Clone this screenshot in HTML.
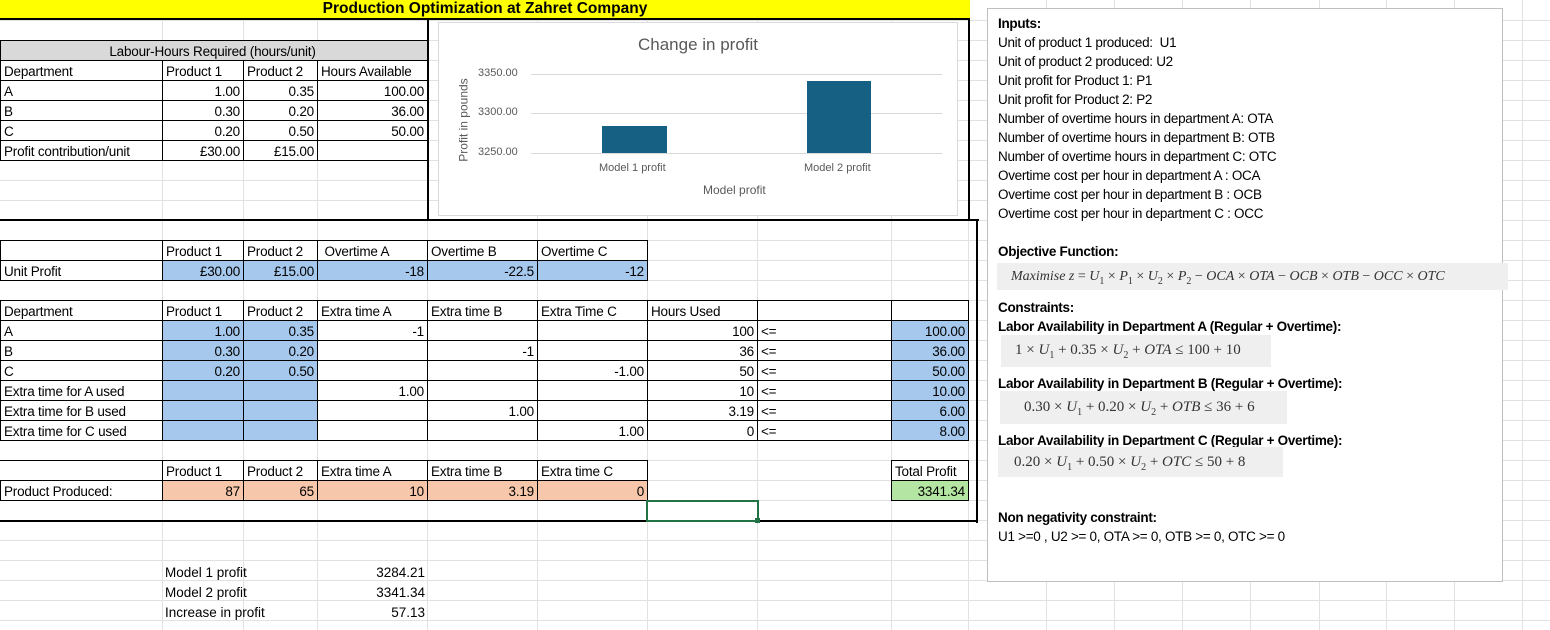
<!DOCTYPE html>
<html><head><meta charset="utf-8"><style>
*{margin:0;padding:0;box-sizing:border-box}
body{width:1550px;height:630px;position:relative;overflow:hidden;background:#fff;font-family:"Liberation Sans",sans-serif;font-size:13.5px;color:#000}
.g{position:absolute;background:#e1e1e1}
.c{position:absolute;height:21px;line-height:21px;border:1px solid #000;padding:0 3px;white-space:nowrap;overflow:hidden;letter-spacing:-0.2px}
.n{position:absolute;height:20px;line-height:21px;padding:0 3px;white-space:nowrap}
.r{text-align:right}
.b{background:#a6c8ec}
.s{background:#f7c7ac}
.t{position:absolute;left:998px;font-size:13.5px;line-height:19px;white-space:nowrap;letter-spacing:-0.3px}
.h{font-weight:bold}
.m{position:absolute;background:#efefef;font-family:"Liberation Serif",serif;font-size:15px;color:#333;white-space:nowrap;padding-left:14px}
.m i{font-style:italic}
.m sub{font-size:10px;line-height:0}
.ax{position:absolute;font-size:11px;color:#595959;white-space:nowrap}
</style></head><body>
<div id="grid"></div>
<script>
var g=document.getElementById('grid'),h='';
var xs=[162,243,317,427,537,647,757,891,968,1046,1114,1182,1250,1319,1386,1454,1522];
xs.forEach(function(x){h+='<div class="g" style="left:'+x+'px;top:0;width:1px;height:630px"></div>';});
for(var y=20;y<630;y+=20)h+='<div class="g" style="left:0;top:'+y+'px;width:1550px;height:1px"></div>';
g.innerHTML=h;
</script>
<div style="position:absolute;left:0;top:0;width:970px;height:18px;background:#ffff00;text-align:center;font-weight:bold;font-size:15.5px;line-height:18px">Production Optimization at Zahret Company</div>
<div style="position:absolute;left:0;top:18px;width:970px;height:2px;background:#000"></div>

<div class="c" style="left:0;top:40px;width:428px;background:#d9d9d9;text-align:center;padding-left:0">Labour-Hours Required (hours/unit)</div>
<div class="c" style="left:0;top:60px;width:163px">Department</div><div class="c" style="left:162px;top:60px;width:82px">Product 1</div><div class="c" style="left:243px;top:60px;width:75px">Product 2</div><div class="c" style="left:317px;top:60px;width:111px">Hours Available</div>
<div class="c" style="left:0;top:80px;width:163px">A</div><div class="c r" style="left:162px;top:80px;width:82px">1.00</div><div class="c r" style="left:243px;top:80px;width:75px">0.35</div><div class="c r" style="left:317px;top:80px;width:111px">100.00</div>
<div class="c" style="left:0;top:100px;width:163px">B</div><div class="c r" style="left:162px;top:100px;width:82px">0.30</div><div class="c r" style="left:243px;top:100px;width:75px">0.20</div><div class="c r" style="left:317px;top:100px;width:111px">36.00</div>
<div class="c" style="left:0;top:120px;width:163px">C</div><div class="c r" style="left:162px;top:120px;width:82px">0.20</div><div class="c r" style="left:243px;top:120px;width:75px">0.50</div><div class="c r" style="left:317px;top:120px;width:111px">50.00</div>
<div class="c" style="left:0;top:140px;width:163px">Profit contribution/unit</div><div class="c r" style="left:162px;top:140px;width:82px">£30.00</div><div class="c r" style="left:243px;top:140px;width:75px">£15.00</div><div class="c" style="left:317px;top:140px;width:111px"></div>

<div style="position:absolute;left:427px;top:18px;width:2px;height:203px;background:#000"></div>
<div style="position:absolute;left:968px;top:18px;width:2px;height:203px;background:#000"></div>
<div style="position:absolute;left:438px;top:22px;width:520px;height:194px;background:#fff;border:1px solid #d9d9d9"></div>
<div style="position:absolute;left:438px;top:35px;width:520px;text-align:center;font-size:17px;color:#595959">Change in profit</div>
<div style="position:absolute;left:531px;top:74px;width:411px;height:1px;background:#d9d9d9"></div>
<div style="position:absolute;left:531px;top:113px;width:411px;height:1px;background:#d9d9d9"></div>
<div style="position:absolute;left:531px;top:153px;width:411px;height:1px;background:#d9d9d9"></div>
<div class="ax" style="left:478px;top:67px">3350.00</div>
<div class="ax" style="left:478px;top:106px">3300.00</div>
<div class="ax" style="left:478px;top:146px">3250.00</div>
<div style="position:absolute;left:602px;top:126px;width:65px;height:27px;background:#166083"></div>
<div style="position:absolute;left:807px;top:81px;width:64px;height:72px;background:#166083"></div>
<div class="ax" style="left:599px;top:162px">Model 1 profit</div>
<div class="ax" style="left:804px;top:162px">Model 2 profit</div>
<div class="ax" style="left:703px;top:183px;font-size:12px">Model profit</div>
<div class="ax" style="left:416px;top:113px;font-size:12px;transform:rotate(-90deg);transform-origin:center;width:95px;text-align:center">Profit in pounds</div>

<div style="position:absolute;left:0;top:219px;width:979px;height:2px;background:#000"></div>
<div style="position:absolute;left:976px;top:219px;width:2px;height:304px;background:#000"></div>
<div style="position:absolute;left:0;top:520px;width:978px;height:2px;background:#000"></div>

<div class="c" style="left:0;top:240px;width:163px"></div><div class="c" style="left:162px;top:240px;width:82px">Product 1</div><div class="c" style="left:243px;top:240px;width:75px">Product 2</div><div class="c" style="left:317px;top:240px;width:111px">&nbsp;Overtime A</div><div class="c" style="left:427px;top:240px;width:111px">Overtime B</div><div class="c" style="left:537px;top:240px;width:111px">Overtime C</div>
<div class="c" style="left:0;top:260px;width:163px">Unit Profit</div><div class="c r b" style="left:162px;top:260px;width:82px">£30.00</div><div class="c r b" style="left:243px;top:260px;width:75px">£15.00</div><div class="c r b" style="left:317px;top:260px;width:111px">-18</div><div class="c r b" style="left:427px;top:260px;width:111px">-22.5</div><div class="c r b" style="left:537px;top:260px;width:111px">-12</div>

<div class="c" style="left:0;top:300px;width:163px">Department</div><div class="c" style="left:162px;top:300px;width:82px">Product 1</div><div class="c" style="left:243px;top:300px;width:75px">Product 2</div><div class="c" style="left:317px;top:300px;width:111px">Extra time A</div><div class="c" style="left:427px;top:300px;width:111px">Extra time B</div><div class="c" style="left:537px;top:300px;width:111px">Extra Time C</div><div class="c" style="left:647px;top:300px;width:111px">Hours Used</div><div class="c" style="left:757px;top:300px;width:135px"></div><div class="c" style="left:891px;top:300px;width:78px"></div>

<div class="c" style="left:0;top:320px;width:163px">A</div><div class="c r b" style="left:162px;top:320px;width:82px">1.00</div><div class="c r b" style="left:243px;top:320px;width:75px">0.35</div><div class="c r" style="left:317px;top:320px;width:111px">-1</div><div class="c" style="left:427px;top:320px;width:111px"></div><div class="c" style="left:537px;top:320px;width:111px"></div><div class="c r" style="left:647px;top:320px;width:111px">100</div><div class="c" style="left:757px;top:320px;width:135px">&lt;=</div><div class="c r b" style="left:891px;top:320px;width:78px">100.00</div>

<div class="c" style="left:0;top:340px;width:163px">B</div><div class="c r b" style="left:162px;top:340px;width:82px">0.30</div><div class="c r b" style="left:243px;top:340px;width:75px">0.20</div><div class="c" style="left:317px;top:340px;width:111px"></div><div class="c r" style="left:427px;top:340px;width:111px">-1</div><div class="c" style="left:537px;top:340px;width:111px"></div><div class="c r" style="left:647px;top:340px;width:111px">36</div><div class="c" style="left:757px;top:340px;width:135px">&lt;=</div><div class="c r b" style="left:891px;top:340px;width:78px">36.00</div>

<div class="c" style="left:0;top:360px;width:163px">C</div><div class="c r b" style="left:162px;top:360px;width:82px">0.20</div><div class="c r b" style="left:243px;top:360px;width:75px">0.50</div><div class="c" style="left:317px;top:360px;width:111px"></div><div class="c" style="left:427px;top:360px;width:111px"></div><div class="c r" style="left:537px;top:360px;width:111px">-1.00</div><div class="c r" style="left:647px;top:360px;width:111px">50</div><div class="c" style="left:757px;top:360px;width:135px">&lt;=</div><div class="c r b" style="left:891px;top:360px;width:78px">50.00</div>

<div class="c" style="left:0;top:380px;width:163px">Extra time for A used</div><div class="c b" style="left:162px;top:380px;width:82px"></div><div class="c b" style="left:243px;top:380px;width:75px"></div><div class="c r" style="left:317px;top:380px;width:111px">1.00</div><div class="c" style="left:427px;top:380px;width:111px"></div><div class="c" style="left:537px;top:380px;width:111px"></div><div class="c r" style="left:647px;top:380px;width:111px">10</div><div class="c" style="left:757px;top:380px;width:135px">&lt;=</div><div class="c r b" style="left:891px;top:380px;width:78px">10.00</div>

<div class="c" style="left:0;top:400px;width:163px">Extra time for B used</div><div class="c b" style="left:162px;top:400px;width:82px"></div><div class="c b" style="left:243px;top:400px;width:75px"></div><div class="c" style="left:317px;top:400px;width:111px"></div><div class="c r" style="left:427px;top:400px;width:111px">1.00</div><div class="c" style="left:537px;top:400px;width:111px"></div><div class="c r" style="left:647px;top:400px;width:111px">3.19</div><div class="c" style="left:757px;top:400px;width:135px">&lt;=</div><div class="c r b" style="left:891px;top:400px;width:78px">6.00</div>

<div class="c" style="left:0;top:420px;width:163px">Extra time for C used</div><div class="c b" style="left:162px;top:420px;width:82px"></div><div class="c b" style="left:243px;top:420px;width:75px"></div><div class="c" style="left:317px;top:420px;width:111px"></div><div class="c" style="left:427px;top:420px;width:111px"></div><div class="c r" style="left:537px;top:420px;width:111px">1.00</div><div class="c r" style="left:647px;top:420px;width:111px">0</div><div class="c" style="left:757px;top:420px;width:135px">&lt;=</div><div class="c r b" style="left:891px;top:420px;width:78px">8.00</div>

<div class="c" style="left:0;top:460px;width:163px;border-left:0"></div><div class="c" style="left:162px;top:460px;width:82px">Product 1</div><div class="c" style="left:243px;top:460px;width:75px">Product 2</div><div class="c" style="left:317px;top:460px;width:111px">Extra time A</div><div class="c" style="left:427px;top:460px;width:111px">Extra time B</div><div class="c" style="left:537px;top:460px;width:111px">Extra time C</div><div class="c" style="left:891px;top:460px;width:78px">Total Profit</div>
<div class="c" style="left:0;top:480px;width:163px">Product Produced:</div><div class="c r s" style="left:162px;top:480px;width:82px">87</div><div class="c r s" style="left:243px;top:480px;width:75px">65</div><div class="c r s" style="left:317px;top:480px;width:111px">10</div><div class="c r s" style="left:427px;top:480px;width:111px">3.19</div><div class="c r s" style="left:537px;top:480px;width:111px">0</div><div class="c r" style="left:891px;top:480px;width:78px;background:#b4e5a2">3341.34</div>
<div style="position:absolute;left:646px;top:500px;width:113px;height:22px;border:2px solid #217346;background:#fff"></div>
<div style="position:absolute;left:755px;top:518px;width:5px;height:5px;background:#217346"></div>

<div class="n" style="left:162px;top:562px">Model 1 profit</div><div class="n r" style="left:317px;top:562px;width:111px">3284.21</div>
<div class="n" style="left:162px;top:582px">Model 2 profit</div><div class="n r" style="left:317px;top:582px;width:111px">3341.34</div>
<div class="n" style="left:162px;top:602px">Increase in profit</div><div class="n r" style="left:317px;top:602px;width:111px">57.13</div>

<div style="position:absolute;left:987px;top:8px;width:516px;height:574px;background:#fff;border:1px solid #bfbfbf"></div>
<div class="t" style="top:14px"><span class="h">Inputs:</span><br>Unit of product 1 produced:&nbsp; U1<br>Unit of product 2 produced: U2<br>Unit profit for Product 1: P1<br>Unit profit for Product 2: P2<br>Number of overtime hours in department A: OTA<br>Number of overtime hours in department B: OTB<br>Number of overtime hours in department C: OTC<br>Overtime cost per hour in department A : OCA<br>Overtime cost per hour in department B : OCB<br>Overtime cost per hour in department C : OCC</div>
<div class="t h" style="top:242px">Objective Function:</div>
<div class="m" style="left:997px;top:263px;width:511px;height:27px;line-height:27px;font-size:14px"><i>Maximise z</i> = <i>U</i><sub>1</sub> × <i>P</i><sub>1</sub> × <i>U</i><sub>2</sub> × <i>P</i><sub>2</sub> − <i>OCA</i> × <i>OTA</i> − <i>OCB</i> × <i>OTB</i> − <i>OCC</i> × <i>OTC</i></div>
<div class="t h" style="top:298px">Constraints:<br>Labor Availability in Department A (Regular + Overtime):</div>
<div class="m" style="left:1001px;top:335px;width:270px;height:32px;line-height:30px">1 × <i>U</i><sub>1</sub> + 0.35 × <i>U</i><sub>2</sub> + <i>OTA</i> ≤ 100 + 10</div>
<div class="t h" style="top:374px">Labor Availability in Department B (Regular + Overtime):</div>
<div class="m" style="left:1000px;top:391px;width:287px;height:33px;line-height:32px;padding-left:24px">0.30 × <i>U</i><sub>1</sub> + 0.20 × <i>U</i><sub>2</sub> + <i>OTB</i> ≤ 36 + 6</div>
<div class="t h" style="top:431px">Labor Availability in Department C (Regular + Overtime):</div>
<div class="m" style="left:998px;top:447px;width:285px;height:30px;line-height:30px;padding-left:16px">0.20 × <i>U</i><sub>1</sub> + 0.50 × <i>U</i><sub>2</sub> + <i>OTC</i> ≤ 50 + 8</div>
<div class="t" style="top:508px"><span class="h">Non negativity constraint:</span><br>U1 &gt;=0 , U2 &gt;= 0, OTA &gt;= 0, OTB &gt;= 0, OTC &gt;= 0</div>
</body></html>
